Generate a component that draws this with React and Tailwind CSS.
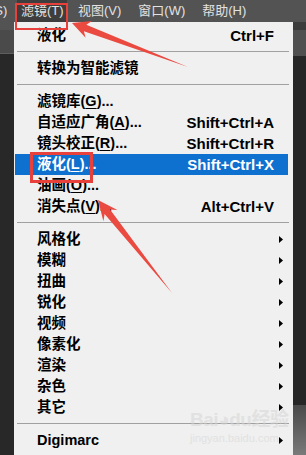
import React from 'react';

const font = "font-['Liberation_Sans','Noto_Sans_CJK_SC',sans-serif]";

const Sub = () => (
    <svg width="4" height="7" viewBox="0 0 4 7" className="block">
        <polygon points="0,0 4,3.5 0,7" fill="#000" />
    </svg>
);

const Item = ({ label, mnemonic, dots, shortcut, sub, active }) => (
    <div
        className={`ml-[1px] mr-[5px] h-[21px] flex items-center justify-between pl-[22px] ${
            sub ? 'pr-[5px]' : 'pr-[14px]'
        } ${active ? 'bg-[#0e70cf] text-white' : 'text-black'}`}
    >
        <span className="text-[14.5px] font-bold leading-none whitespace-nowrap">
            {label}
            {mnemonic && (
                <>
                    (<span className="underline underline-offset-2">{mnemonic}</span>)
                </>
            )}
            {dots && '...'}
        </span>
        {shortcut && <span className="text-[15px] font-bold leading-none whitespace-nowrap">{shortcut}</span>}
        {sub && <Sub />}
    </div>
);

const Sep = () => (
    <div className="h-[12px] pt-[5px] pl-[3px] pr-[4px]">
        <div className="h-px bg-[#a0a0a0]" />
    </div>
);

const App = () => {
    return (
        <div className={`relative w-[306px] h-[455px] overflow-hidden bg-[#262626] ${font}`}>
            {/* menu bar */}
            <div className="h-[22px] bg-[#535353] flex items-center text-[13px] text-[#e2e2e2] whitespace-nowrap">
                <span className="-ml-[10px] w-[27px]">(S)</span>
                <div className="h-full w-[50px] bg-[#3e3e3e] flex items-center pl-[4px]">滤镜(T)</div>
                <span className="ml-[11px]">视图(V)</span>
                <span className="ml-[17px]">窗口(W)</span>
                <span className="ml-[17px]">帮助(H)</span>
            </div>

            <div className="flex h-[433px]">
                {/* left edge of workspace */}
                <div className="w-[14px] flex flex-col">
                    <div className="h-[8px] bg-[#535353]" />
                    <div className="h-[24px] bg-[#4a4a4a] border-b border-[#5e5e5e]" />
                    <div className="flex-1 bg-[#282828]" />
                </div>

                {/* filter menu */}
                <div className="w-[279px] bg-[#f0f0f0] pt-[3px]">
                    <Item label="液化" shortcut="Ctrl+F" />
                    <Sep />
                    <Item label="转换为智能滤镜" />
                    <Sep />
                    <Item label="滤镜库" mnemonic="G" dots />
                    <Item label="自适应广角" mnemonic="A" dots shortcut="Shift+Ctrl+A" />
                    <Item label="镜头校正" mnemonic="R" dots shortcut="Shift+Ctrl+R" />
                    <Item label="液化" mnemonic="L" dots shortcut="Shift+Ctrl+X" active />
                    <Item label="油画" mnemonic="O" dots />
                    <Item label="消失点" mnemonic="V" dots shortcut="Alt+Ctrl+V" />
                    <Sep />
                    <Item label="风格化" sub />
                    <Item label="模糊" sub />
                    <Item label="扭曲" sub />
                    <Item label="锐化" sub />
                    <Item label="视频" sub />
                    <Item label="像素化" sub />
                    <Item label="渲染" sub />
                    <Item label="杂色" sub />
                    <Item label="其它" sub />
                    <Sep />
                    <Item label="Digimarc" sub />
                </div>

                {/* right edge of workspace */}
                <div className="flex-1 flex flex-col">
                    <div className="h-[8px] bg-[#3c3c3c]" />
                    <div className="h-[26px] bg-[#4f4f4f]" />
                    <div className="flex-1 bg-[#262626]" />
                    <div className="h-[50px] bg-gradient-to-b from-[#4a4a4a] to-[#7a7a7a]" />
                </div>
            </div>

            {/* watermark */}
            <div className="absolute left-[190px] top-[410px] text-[#d4d4d4] opacity-50 leading-none pointer-events-none">
                <div className="text-[19px] font-bold tracking-tight">Bai◕du经验</div>
                <div className="text-[11px] mt-[4px]">jingyan.baidu.com</div>
            </div>

            {/* annotations */}
            <div className="absolute left-[15px] top-[3px] w-[53px] h-[27px] border-2 border-[#e8403a]" />
            <div className="absolute left-[30px] top-[152px] w-[63px] h-[31px] border-[3px] border-[#e8403a]" />
            <svg className="absolute left-0 top-0" width="306" height="455" viewBox="0 0 306 455">
                <polygon
                    points="72,23 92,21 86.3,24.7 188,67 83.9,31.2 85.6,37.8"
                    fill="#ea4a3f"
                />
                <polygon
                    points="98,200 117.4,210 110,209.5 172,293 104.6,213.9 103.4,221.2"
                    fill="#ea4a3f"
                />
            </svg>
        </div>
    );
};

export default App;
